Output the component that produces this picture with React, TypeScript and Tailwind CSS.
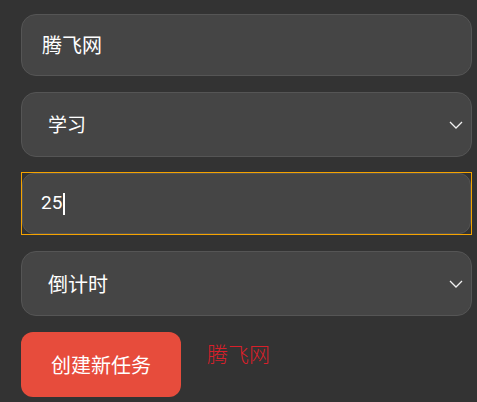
import React from "react";

const font = { fontFamily: '"Noto Sans CJK SC", "Noto Sans", sans-serif' };

function Chevron() {
  return (
    <svg width="14" height="8" viewBox="0 0 14 8" fill="none" className="shrink-0">
      <path d="M1 1 L7 7 L13 1" stroke="#f0f0f0" strokeWidth="1.3" />
    </svg>
  );
}

export default function App() {
  return (
    <div className="min-h-[402px] w-full bg-[#333333] pt-[14px] pl-[21px]" style={font}>
      <div className="flex w-[451px] flex-col gap-[16px]">
        <div className="flex h-[62px] items-center rounded-[15px] border border-[#555555] bg-[#454545] px-[20px] text-[20px] text-white">
          腾飞网
        </div>
        <div className="flex h-[65px] items-center justify-between rounded-[15px] border border-[#555555] bg-[#454545] pl-[26px] pr-[8px] text-[19px] text-white">
          <span>学习</span>
          <Chevron />
        </div>
        <div className="mx-[1px] mb-[1px] h-[61px] ring-1 ring-[#f5a300]">
          <div className="flex h-full items-center rounded-[12px] border border-[#555555] bg-[#454545] px-[18px] text-[19px] text-white">
            <span style={{ fontFamily: '"Roboto", "Noto Sans", sans-serif' }}>25</span>
            <span className="ml-[1px] inline-block h-[22px] w-[2px] bg-white" />
          </div>
        </div>
        <div className="flex h-[65px] items-center justify-between rounded-[15px] border border-[#555555] bg-[#454545] pl-[26px] pr-[8px] text-[20px] text-white">
          <span>倒计时</span>
          <Chevron />
        </div>
        <div className="flex items-center gap-[26px]">
          <button className="h-[65px] w-[160px] rounded-[12px] bg-[#e74c3c] text-[20px] text-white">
            创建新任务
          </button>
          <span className="-mt-[22px] text-[21px] font-light text-[#d9202a]">腾飞网</span>
        </div>
      </div>
    </div>
  );
}
